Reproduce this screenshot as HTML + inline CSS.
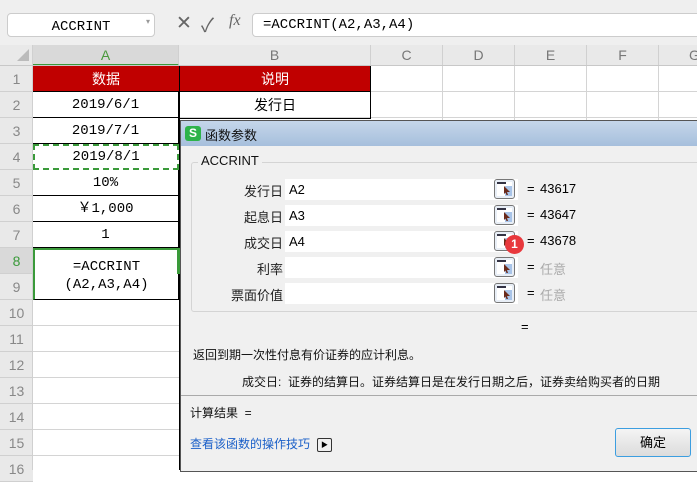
<!DOCTYPE html>
<html><head><meta charset="utf-8"><style>
*{margin:0;padding:0;box-sizing:border-box}
body{width:697px;height:470px;overflow:hidden;background:#fff;font-family:"Liberation Sans","Noto Sans CJK SC",sans-serif;position:relative;font-size:13px}
.a{position:absolute}
.mono{font-family:"Liberation Mono","Noto Sans CJK SC",monospace}
.hl{position:absolute;height:1px;background:#d4d4d4}
.vl{position:absolute;width:1px;background:#d4d4d4}
.rh{position:absolute;left:0;width:33px;height:26px;background:#e9e9e9;color:#888;text-align:center;line-height:26px;font-size:14px;border-bottom:1px solid #d0d0d0}
.ch{position:absolute;top:45px;height:21px;background:#e9e9e9;color:#777;text-align:center;line-height:21px;font-size:14px;border-right:1px solid #d0d0d0}
.cellA{position:absolute;left:33px;width:146px;height:26px;text-align:center;line-height:26px;font-size:14px;border-bottom:1px solid #000;border-right:1px solid #000}
.lbl{position:absolute;width:90px;text-align:right;left:193px;font-size:13px;color:#222}
.inp{position:absolute;left:285px;width:233px;height:21px;background:#fff;font-size:13px;line-height:21px;padding-left:4px}
.btn{position:absolute;left:494px;width:21px;height:20px;border:1px solid #777;border-radius:3px;background:#e8eef6}
.btn svg{position:absolute;left:2px;top:2px}
.eq{position:absolute;left:527px;font-size:13px}
.val{position:absolute;left:540px;font-size:13px}
</style></head><body>
<div class="a" style="left:0;top:0;width:697px;height:45px;background:#efefef"></div>
<div class="a" style="left:7px;top:13px;width:148px;height:24px;background:#fff;border:1px solid #ccc;border-radius:4px;text-align:center;line-height:22px;font-size:14px" ><span class="mono">ACCRINT</span></div>
<div class="a" style="left:146px;top:17px;font-size:8px;color:#999">▾</div>
<div class="a" style="left:176px;top:12px;font-size:19px;color:#666">✕</div>
<div class="a" style="left:201px;top:11px;font-size:19px;color:#666">✓</div>
<div class="a" style="left:229px;top:12px;font-size:16px;color:#666;font-style:italic;font-family:'Liberation Serif',serif">fx</div>
<div class="a mono" style="left:252px;top:13px;width:450px;height:24px;background:#fff;border:1px solid #ccc;border-radius:4px;line-height:22px;padding-left:10px;font-size:14px">=ACCRINT(A2,A3,A4)</div>
<div class="a" style="left:0;top:45px;width:33px;height:21px;background:#e9e9e9;border-right:1px solid #d0d0d0"></div>
<div class="a" style="left:17px;top:49px;width:0;height:0;border-left:12px solid transparent;border-bottom:12px solid #bbb"></div>
<div class="ch" style="left:33px;width:146px;background:#d9d9d9;color:#4a9a3c;border-bottom:2px solid #3a9a3a">A</div>
<div class="ch" style="left:179px;width:192px">B</div>
<div class="ch" style="left:371px;width:72px">C</div>
<div class="ch" style="left:443px;width:72px">D</div>
<div class="ch" style="left:515px;width:72px">E</div>
<div class="ch" style="left:587px;width:72px">F</div>
<div class="ch" style="left:659px;width:72px">G</div>
<div class="a" style="left:0;top:65px;width:697px;height:1px;background:#c8c8c8"></div>
<div class="rh" style="top:66px">1</div><div class="rh" style="top:92px">2</div><div class="rh" style="top:118px">3</div><div class="rh" style="top:144px">4</div><div class="rh" style="top:170px">5</div><div class="rh" style="top:196px">6</div><div class="rh" style="top:222px">7</div><div class="rh" style="top:248px;background:#d9d9d9;color:#3a9a3a">8</div><div class="rh" style="top:274px">9</div><div class="rh" style="top:300px">10</div><div class="rh" style="top:326px">11</div><div class="rh" style="top:352px">12</div><div class="rh" style="top:378px">13</div><div class="rh" style="top:404px">14</div><div class="rh" style="top:430px">15</div><div class="rh" style="top:456px">16</div>
<div class="a" style="left:32px;top:66px;width:1px;height:404px;background:#d0d0d0"></div>
<div class="hl" style="left:33px;top:117px;width:664px"></div>
<div class="hl" style="left:33px;top:91px;width:664px"></div>
<div class="hl" style="left:33px;top:325px;width:148px"></div><div class="hl" style="left:33px;top:351px;width:148px"></div><div class="hl" style="left:33px;top:377px;width:148px"></div><div class="hl" style="left:33px;top:403px;width:148px"></div><div class="hl" style="left:33px;top:429px;width:148px"></div><div class="hl" style="left:33px;top:455px;width:148px"></div>
<div class="vl" style="left:442px;top:66px;height:55px"></div><div class="vl" style="left:514px;top:66px;height:55px"></div><div class="vl" style="left:586px;top:66px;height:55px"></div><div class="vl" style="left:658px;top:66px;height:55px"></div>
<div class="vl" style="left:179px;top:66px;height:404px;background:#000"></div>
<div class="a" style="left:33px;top:66px;width:338px;height:26px;background:#c00000;border-bottom:1px solid #000"></div>
<div class="a" style="left:33px;top:66px;width:146px;text-align:center;line-height:26px;color:#fff;font-size:14px">数据</div>
<div class="a" style="left:179px;top:66px;width:192px;border-left:1px solid #000;border-right:1px solid #000;height:52px"></div>
<div class="a" style="left:179px;top:66px;width:192px;text-align:center;line-height:26px;color:#fff;font-size:14px">说明</div>
<div class="a" style="left:179px;top:92px;width:192px;text-align:center;line-height:26px;font-size:14px;border-bottom:1px solid #000;height:27px">发行日</div>
<div class="cellA mono" style="top:92px">2019/6/1</div>
<div class="cellA mono" style="top:118px">2019/7/1</div>
<div class="cellA mono" style="top:144px;border:2px dashed #3a9a3a;line-height:22px">2019/8/1</div>
<div class="cellA mono" style="top:170px">10%</div>
<div class="cellA mono" style="top:196px">￥1,000</div>
<div class="cellA mono" style="top:222px">1</div>
<div class="cellA mono" style="top:248px;height:52px;line-height:18px;padding-top:8px;border-top:2px solid #3a9a3a;border-left:2px solid #3a9a3a">=ACCRINT<br>(A2,A3,A4)</div>
<div class="a" style="left:177px;top:248px;width:3px;height:26px;background:#3a9a3a"></div>
<div class="a" style="left:180px;top:120px;width:520px;height:352px;background:#f0f0f0;border:1px solid #555"></div>
<div class="a" style="left:181px;top:121px;width:516px;height:25px;background:linear-gradient(#c5d6ea,#a6bfdc)"></div>
<div class="a" style="left:185px;top:126px;width:16px;height:15px;background:#2db34a;border-radius:3px;color:#fff;font-size:12px;font-weight:bold;text-align:center;line-height:15px">S</div>
<div class="a" style="left:205px;top:125px;font-size:13px;color:#111">函数参数</div>
<div class="a" style="left:191px;top:162px;width:520px;height:150px;border:1px solid #d4d4d4;border-radius:3px"></div>
<div class="a" style="left:198px;top:153px;background:#f0f0f0;padding:0 3px;font-size:13px;color:#111">ACCRINT</div>
<div class="lbl" style="top:181px">发行日</div><div class="inp" style="top:179px">A2</div><div class="btn" style="top:179px"><svg width="15" height="14"><rect x="0" y="0" width="15" height="14" fill="#fff"/><rect x="0" y="0" width="9" height="2" fill="#334"/><rect x="8" y="4" width="7" height="10" fill="#a9c4e8"/><path d="M7 4 L13 10 L10 10 L11 13 L9.5 13 L8.5 10.5 L7 12 Z" fill="#6a2a1a"/></svg></div><div class="eq" style="top:181px">=</div><div class="val" style="top:181px">43617</div>
<div class="lbl" style="top:207px">起息日</div><div class="inp" style="top:205px">A3</div><div class="btn" style="top:205px"><svg width="15" height="14"><rect x="0" y="0" width="15" height="14" fill="#fff"/><rect x="0" y="0" width="9" height="2" fill="#334"/><rect x="8" y="4" width="7" height="10" fill="#a9c4e8"/><path d="M7 4 L13 10 L10 10 L11 13 L9.5 13 L8.5 10.5 L7 12 Z" fill="#6a2a1a"/></svg></div><div class="eq" style="top:207px">=</div><div class="val" style="top:207px">43647</div>
<div class="lbl" style="top:233px">成交日</div><div class="inp" style="top:231px">A4</div><div class="btn" style="top:231px"><svg width="15" height="14"><rect x="0" y="0" width="15" height="14" fill="#fff"/><rect x="0" y="0" width="9" height="2" fill="#334"/><rect x="8" y="4" width="7" height="10" fill="#a9c4e8"/><path d="M7 4 L13 10 L10 10 L11 13 L9.5 13 L8.5 10.5 L7 12 Z" fill="#6a2a1a"/></svg></div><div class="eq" style="top:233px">=</div><div class="val" style="top:233px">43678</div>
<div class="lbl" style="top:259px">利率</div><div class="inp" style="top:257px"></div><div class="btn" style="top:257px"><svg width="15" height="14"><rect x="0" y="0" width="15" height="14" fill="#fff"/><rect x="0" y="0" width="9" height="2" fill="#334"/><rect x="8" y="4" width="7" height="10" fill="#a9c4e8"/><path d="M7 4 L13 10 L10 10 L11 13 L9.5 13 L8.5 10.5 L7 12 Z" fill="#6a2a1a"/></svg></div><div class="eq" style="top:259px">=</div><div class="val" style="top:259px;color:#aaa">任意</div>
<div class="lbl" style="top:285px">票面价值</div><div class="inp" style="top:283px"></div><div class="btn" style="top:283px"><svg width="15" height="14"><rect x="0" y="0" width="15" height="14" fill="#fff"/><rect x="0" y="0" width="9" height="2" fill="#334"/><rect x="8" y="4" width="7" height="10" fill="#a9c4e8"/><path d="M7 4 L13 10 L10 10 L11 13 L9.5 13 L8.5 10.5 L7 12 Z" fill="#6a2a1a"/></svg></div><div class="eq" style="top:285px">=</div><div class="val" style="top:285px;color:#aaa">任意</div>
<div class="a" style="left:505px;top:235px;width:19px;height:19px;border-radius:50%;background:#e8383d;color:#fff;font-size:12px;font-weight:bold;text-align:center;line-height:19px">1</div>
<div class="a" style="left:521px;top:319px;font-size:13px">=</div>
<div class="a" style="left:193px;top:346px;font-size:12px;color:#111">返回到期一次性付息有价证券的应计利息。</div>
<div class="a" style="left:242px;top:373px;font-size:12px;color:#111">成交日:&nbsp; 证券的结算日。证券结算日是在发行日期之后，证券卖给购买者的日期</div>
<div class="a" style="left:181px;top:395px;width:516px;height:1px;background:#aaa"></div>
<div class="a" style="left:190px;top:404px;font-size:12px;color:#111">计算结果&nbsp; =</div>
<div class="a" style="left:190px;top:435px;font-size:12px;color:#1a5fc8">查看该函数的操作技巧</div>
<div class="a" style="left:317px;top:438px;width:15px;height:14px;border:1px solid #333;border-radius:2px;font-size:7px;text-align:center;line-height:13px">▶</div>
<div class="a" style="left:615px;top:428px;width:76px;height:29px;border:1px solid #3c9ee0;border-radius:3px;background:linear-gradient(#f4f4f4,#dcdcdc);text-align:center;line-height:27px;font-size:13px">确定</div>
</body></html>
